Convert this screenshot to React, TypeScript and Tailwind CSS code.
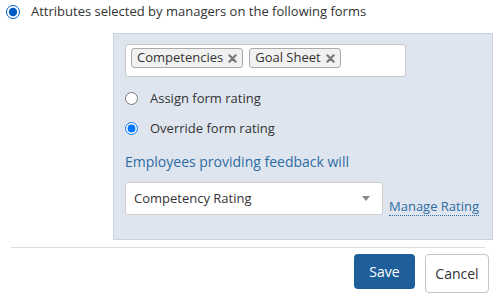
import { useState } from "react";

const Tag = ({ label }: { label: string }) => (
  <span className="flex items-center gap-[5px] h-[20px] px-[5px] border border-[#aaaaaa] rounded-[3px] bg-[#f1f1f1] text-[13px] text-[#333]">
    {label}
    <svg width="9" height="9" viewBox="0 0 10 10">
      <path d="M1.5 1.5 L8.5 8.5 M8.5 1.5 L1.5 8.5" stroke="#777" strokeWidth="2.4" strokeLinecap="round" />
    </svg>
  </span>
);

const App = () => {
  const [mode, setMode] = useState<"assign" | "override">("override");

  return (
    <div
      className="w-[496px] h-[298px] bg-white text-[13px] text-[#333] overflow-hidden"
      style={{ fontFamily: '"Open Sans", "Noto Sans", sans-serif' }}
    >
      {/* Top option */}
      <label className="flex items-center gap-[11px] pl-[6px] pt-[2px] h-[20px] box-content">
        <input type="radio" defaultChecked className="m-0 w-[14px] h-[14px] accent-[#0075ff]" />
        <span>Attributes selected by managers on the following forms</span>
      </label>

      {/* Settings panel */}
      <div className="ml-[113px] mr-[3px] mt-[11px] h-[207px] border border-[#c9d4e3] bg-[#dfe5ef] pl-[11px] pt-[10px]">
        <div className="w-[281px] h-[33px] bg-white border border-[#c8c8c8] rounded-[3px] flex items-start gap-[6px] px-[5px] pt-[3px]">
          <Tag label="Competencies" />
          <Tag label="Goal Sheet" />
        </div>

        <div className="flex flex-col gap-[17px] mt-[15px]">
          <label className="flex items-center gap-[12px] h-[13px]">
            <input
              type="radio"
              name="rating"
              checked={mode === "assign"}
              onChange={() => setMode("assign")}
              className="m-0 w-[13px] h-[13px] accent-[#0075ff]"
            />
            <span>Assign form rating</span>
          </label>
          <label className="flex items-center gap-[12px] h-[13px]">
            <input
              type="radio"
              name="rating"
              checked={mode === "override"}
              onChange={() => setMode("override")}
              className="m-0 w-[13px] h-[13px] accent-[#0075ff]"
            />
            <span>Override form rating</span>
          </label>
        </div>

        <p className="mt-[17px] text-[14px] text-[#2d6ca2] leading-[20px]">Employees providing feedback will</p>

        <div className="flex items-end gap-[6px] mt-[10px]">
          <div className="w-[258px] h-[33px] bg-white border border-[#cfcfcf] rounded-[3px] flex items-center justify-between pl-[8px] pr-[12px]">
            <span>Competency Rating</span>
            <svg width="8" height="5" viewBox="0 0 8 5">
              <path d="M0 0 L8 0 L4 5 Z" fill="#8a8a8a" />
            </svg>
          </div>
          <a className="text-[#2d6ca2] leading-[18px] border-b border-dotted border-[#2d6ca2] mb-[-1px]">Manage Rating</a>
        </div>
      </div>

      <div className="mx-[11px] mt-[7px] border-t border-[#dddddd]" />

      <div className="flex justify-end gap-[10px] pr-[7px] mt-[6px]">
        <button className="w-[61px] h-[35px] rounded-[4px] bg-[#1e5f9b] text-white text-[14px]">Save</button>
        <button className="w-[64px] h-[39px] rounded-[4px] bg-white border border-[#c4c4c4] text-[#333] text-[14px]">Cancel</button>
      </div>
    </div>
  );
};

export default App;
